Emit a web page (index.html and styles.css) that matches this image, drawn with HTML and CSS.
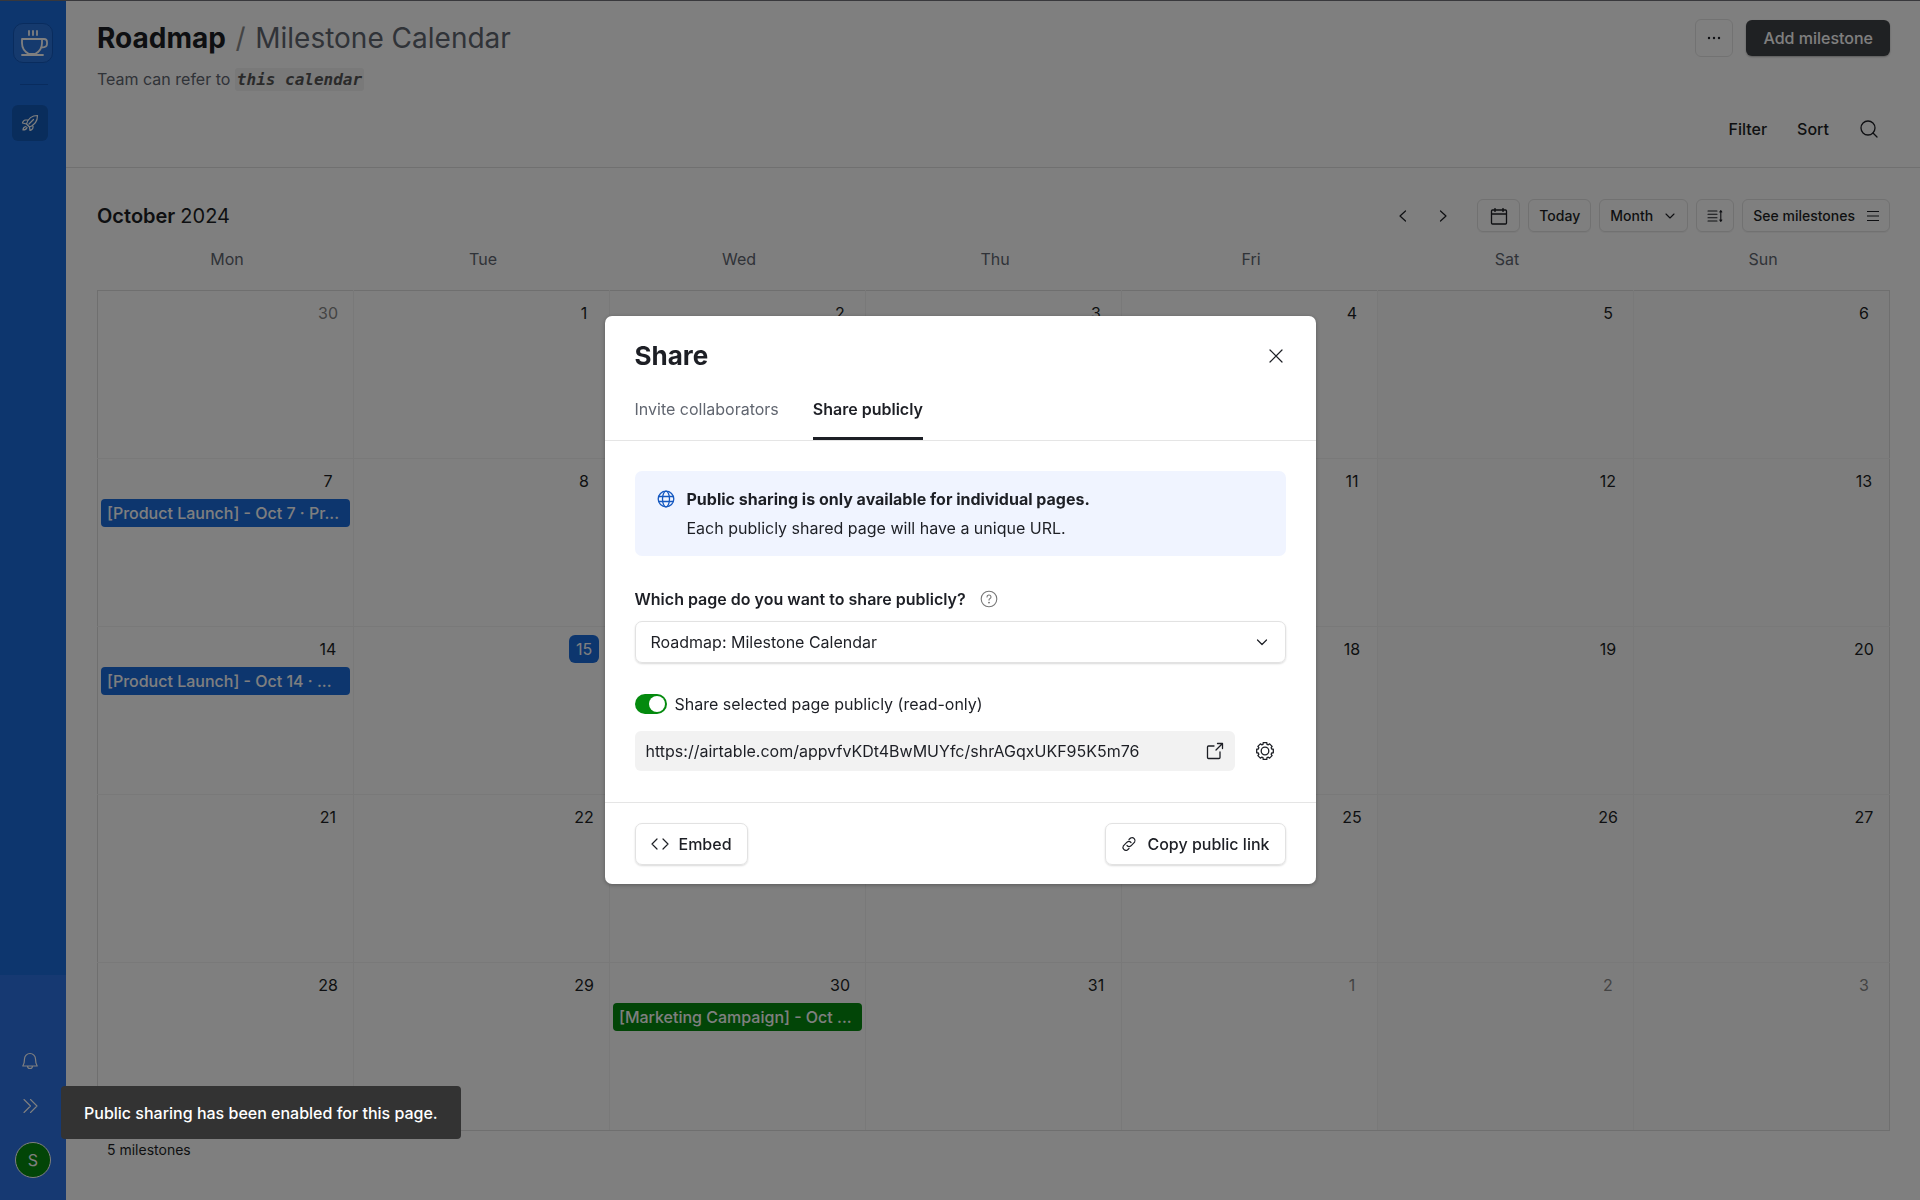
FILE: index.html
```
<!DOCTYPE html>
<html lang="en">
<head>
    <meta charset="UTF-8">
    <meta name="viewport" content="width=device-width, initial-scale=1.0">
    <title>Roadmap - Milestone Calendar</title>
    <link rel="stylesheet" href="styles.css">
</head>
<body>
    <div class="app">
        <nav class="sidebar">
            <a class="logo" href="#" aria-label="Home">
                <svg width="30" height="30" viewBox="0 0 30 30" fill="none" stroke="currentColor" stroke-width="1.800" stroke-linecap="round" stroke-linejoin="round">
                    <path d="M11 3v4M15 3v4M19 3v4M4 11h20v4c0 5-3 9-7 11h-6c-4-2-7-6-7-11zM24 11h2c2 0 3 1 3 3v2c0 2-2 3.500-5.500 3.500M4 27h21"/>
                </svg>
            </a>
            <span class="divider"></span>
            <a class="nav-item" href="#" aria-label="Roadmap">
                <svg width="18" height="18" viewBox="0 0 18 18" fill="none" stroke="currentColor" stroke-width="1.200" stroke-linecap="round" stroke-linejoin="round">
                    <path d="M5.500 10C7 5 10.500 1.500 16.500 1.500c0 5.500-3 9.500-8 11.500zM7.500 6H4.500C3 6 1.500 8 1.500 9l4 1M12 10.500v3c0 1.500-2 3-3 3l-.5-3.500M12.500 5.500L8 10M5 12.500c-2 .3-3 1.500-3 3.500 2 0 3.500-.8 4-2.500"/>
                </svg>
            </a>
            <div class="sidebar-bottom">
                <button class="side-btn" aria-label="Notifications">
                    <svg width="18" height="18" viewBox="0 0 18 18" fill="none" stroke="currentColor" stroke-width="1.200" stroke-linecap="round" stroke-linejoin="round">
                        <path d="M1.800 14C3 12 3.500 10 3.500 7a5.500 5.500 0 0 1 11 0c0 3 .5 5 1.700 7zM6.500 14a2.500 2.500 0 0 0 5 0"/>
                    </svg>
                </button>
                <button class="side-btn" aria-label="Expand sidebar">
                    <svg width="18" height="18" viewBox="0 0 18 18" fill="none" stroke="currentColor" stroke-width="1.100" stroke-linecap="round" stroke-linejoin="round">
                        <path d="M3 2.500L9.500 9 3 15.500M9.500 2.500L16 9l-6.500 6.500"/>
                    </svg>
                </button>
                <button class="avatar">S</button>
            </div>
        </nav>

        <div class="content">
            <header class="page-header">
                <div class="title-row">
                    <h1>Roadmap <span class="slash">/</span> <span class="page-name">Milestone Calendar</span></h1>
                    <button class="more-btn" aria-label="More options">
                        <svg width="14" height="4" viewBox="0 0 14 4" fill="currentColor">
                            <circle cx="2" cy="2" r="1.200"/><circle cx="7" cy="2" r="1.200"/><circle cx="12" cy="2" r="1.200"/>
                        </svg>
                    </button>
                    <button class="add-btn">Add milestone</button>
                </div>
                <p class="subtitle">Team can refer to <code>this calendar</code></p>
                <div class="filter-row">
                    <button>Filter</button>
                    <button>Sort</button>
                    <button aria-label="Search">
                        <svg width="20" height="20" viewBox="0 0 20 20" fill="none" stroke="currentColor" stroke-width="1.300" stroke-linecap="round">
                            <circle cx="9" cy="9" r="7"/><path d="M14 14L18 18"/>
                        </svg>
                    </button>
                </div>
            </header>

            <main class="calendar">
                <div class="calendar-bar">
                    <h2>October <span>2024</span></h2>
                    <div class="arrows">
                        <button aria-label="Previous month">
                            <svg width="16" height="16" viewBox="0 0 16 16" fill="none" stroke="currentColor" stroke-width="1.200" stroke-linecap="round" stroke-linejoin="round"><path d="M10.500 3L5 8l5.500 5"/></svg>
                        </button>
                        <button aria-label="Next month">
                            <svg width="16" height="16" viewBox="0 0 16 16" fill="none" stroke="currentColor" stroke-width="1.200" stroke-linecap="round" stroke-linejoin="round"><path d="M5.500 3L11 8l-5.500 5"/></svg>
                        </button>
                    </div>
                    <button class="tool-btn date-btn" aria-label="Pick a date">
                        <svg width="18" height="18" viewBox="0 0 18 18" fill="none" stroke="currentColor" stroke-width="1.300" stroke-linejoin="round"><rect x="1.500" y="3" width="15" height="14" rx="1"/><path d="M1.500 7h15M5 1v4M13 1v4"/></svg>
                    </button>
                    <button class="tool-btn">Today</button>
                    <div class="tool-select">
                        <select aria-label="Calendar range">
                            <option>Month</option>
                        </select>
                        <svg width="10" height="10" viewBox="0 0 10 10" fill="none" stroke="currentColor" stroke-width="1.100" stroke-linecap="round" stroke-linejoin="round"><path d="M1 3l4 4 4-4"/></svg>
                    </div>
                    <button class="tool-btn height-btn" aria-label="Row height">
                        <svg width="16" height="14" viewBox="0 0 16 14" fill="none" stroke="currentColor" stroke-width="1.100" stroke-linecap="round" stroke-linejoin="round"><path d="M1 2h9M1 5.300h9M1 8.700h9M1 12h9M13.800 2v10M12.800 3l1-1.300 1 1.300M12.800 11l1 1.300 1-1.300"/></svg>
                    </button>
                    <button class="tool-btn see-btn">See milestones
                        <svg width="12" height="12" viewBox="0 0 12 12" stroke="currentColor" stroke-width="1.100"><path d="M0 1.500h12M0 6h12M0 10.500h12"/></svg>
                    </button>
                </div>

                <table class="month">
                    <thead>
                        <tr><th>Mon</th><th>Tue</th><th>Wed</th><th>Thu</th><th>Fri</th><th>Sat</th><th>Sun</th></tr>
                    </thead>
                    <tbody>
                        <tr>
                            <td class="other"><span class="day">30</span></td>
                            <td><span class="day">1</span></td>
                            <td><span class="day">2</span></td>
                            <td><span class="day">3</span></td>
                            <td><span class="day">4</span></td>
                            <td><span class="day">5</span></td>
                            <td><span class="day">6</span></td>
                        </tr>
                        <tr>
                            <td><span class="day">7</span><a class="event" href="#">[Product Launch] - Oct 7 · Pr...</a></td>
                            <td><span class="day">8</span></td>
                            <td><span class="day">9</span></td>
                            <td><span class="day">10</span></td>
                            <td><span class="day">11</span></td>
                            <td><span class="day">12</span></td>
                            <td><span class="day">13</span></td>
                        </tr>
                        <tr>
                            <td><span class="day">14</span><a class="event" href="#">[Product Launch] - Oct 14 · ...</a></td>
                            <td><span class="day today">15</span></td>
                            <td><span class="day">16</span></td>
                            <td><span class="day">17</span></td>
                            <td><span class="day">18</span></td>
                            <td><span class="day">19</span></td>
                            <td><span class="day">20</span></td>
                        </tr>
                        <tr>
                            <td><span class="day">21</span></td>
                            <td><span class="day">22</span></td>
                            <td><span class="day">23</span></td>
                            <td><span class="day">24</span></td>
                            <td><span class="day">25</span></td>
                            <td><span class="day">26</span></td>
                            <td><span class="day">27</span></td>
                        </tr>
                        <tr>
                            <td><span class="day">28</span></td>
                            <td><span class="day">29</span></td>
                            <td><span class="day">30</span><a class="event green" href="#">[Marketing Campaign] - Oct ...</a></td>
                            <td><span class="day">31</span></td>
                            <td class="other"><span class="day">1</span></td>
                            <td class="other"><span class="day">2</span></td>
                            <td class="other"><span class="day">3</span></td>
                        </tr>
                    </tbody>
                </table>
                <p class="count">5 milestones</p>
            </main>
        </div>
    </div>

    <div class="overlay">
        <div class="modal" role="dialog" aria-labelledby="share-title">
            <div class="modal-head">
                <h2 id="share-title">Share</h2>
                <button class="icon-btn" aria-label="Close">
                    <svg width="16" height="16" viewBox="0 0 16 16" stroke="currentColor" stroke-width="1.200" stroke-linecap="round"><path d="M2 2l12 12M14 2L2 14"/></svg>
                </button>
            </div>
            <div class="tabs">
                <button class="tab">Invite collaborators</button>
                <button class="tab active">Share publicly</button>
            </div>

            <div class="modal-body">
                <div class="notice">
                    <svg width="18" height="18" viewBox="0 0 18 18" fill="none" stroke="currentColor" stroke-width="1.300"><circle cx="9" cy="9" r="7.800"/><ellipse cx="9" cy="9" rx="3.500" ry="7.800"/><path d="M1.800 6.500h14.400M1.800 11.500h14.400"/></svg>
                    <div>
                        <strong>Public sharing is only available for individual pages.</strong>
                        <p>Each publicly shared page will have a unique URL.</p>
                    </div>
                </div>

                <div class="field-label">
                    <label for="page">Which page do you want to share publicly?</label>
                    <svg width="18" height="18" viewBox="0 0 18 18" fill="none" stroke="currentColor" stroke-width="1.100" stroke-linecap="round"><circle cx="9" cy="9" r="7.800"/><path d="M7 7a2 2 0 1 1 2.800 1.800c-.6.300-.8.600-.8 1.300"/><circle cx="9" cy="12.600" r=".4" fill="currentColor"/></svg>
                </div>
                <div class="page-select">
                    <select id="page">
                        <option>Roadmap: Milestone Calendar</option>
                    </select>
                    <svg width="12" height="12" viewBox="0 0 12 12" fill="none" stroke="currentColor" stroke-width="1.200" stroke-linecap="round" stroke-linejoin="round"><path d="M1.500 4L6 8.500 10.500 4"/></svg>
                </div>

                <div class="toggle-row">
                    <input type="checkbox" id="public" class="toggle" checked>
                    <label for="public">Share selected page publicly (read-only)</label>
                </div>

                <div class="link-row">
                    <div class="link-box">
                        <input type="text" aria-label="Public link" value="https://airtable.com/appvfvKDt4BwMUYfc/shrAGqxUKF95K5m76" readonly>
                        <a href="#" aria-label="Open link">
                            <svg width="18" height="18" viewBox="0 0 18 18" fill="none" stroke="currentColor" stroke-width="1.300" stroke-linecap="round" stroke-linejoin="round"><path d="M11.500 1.500h5v5M16.500 1.500L10 8M8 4H2.500a1 1 0 0 0-1 1v10.500a1 1 0 0 0 1 1H13a1 1 0 0 0 1-1V10"/></svg>
                        </a>
                    </div>
                    <button class="icon-btn" aria-label="Link settings">
                        <svg width="20" height="20" viewBox="0 0 20 20" fill="none" stroke="currentColor" stroke-width="1.300" stroke-linejoin="round"><circle cx="10" cy="10" r="3.800"/><path d="M11.800 1.700L12 3.300l1.300.5 1.300-.9 2.500 2.500-.9 1.300.5 1.300 1.600.2v3.600l-1.600.2-.5 1.300.9 1.300-2.500 2.500-1.300-.9-1.300.5-.2 1.600H8.200L8 16.700l-1.300-.5-1.300.9-2.500-2.500.9-1.300-.5-1.300-1.600-.2V8.200L3.300 8l.5-1.300-.9-1.300 2.500-2.500 1.300.9L8 3.300l.2-1.600z"/></svg>
                    </button>
                </div>
            </div>

            <div class="modal-foot">
                <button class="foot-btn">
                    <svg width="18" height="14" viewBox="0 0 18 14" fill="none" stroke="currentColor" stroke-width="1.200" stroke-linecap="round" stroke-linejoin="round"><path d="M6 2L1 7l5 5M12 2l5 5-5 5"/></svg>
                    Embed
                </button>
                <button class="foot-btn">
                    <svg width="16" height="16" viewBox="0 0 16 16" fill="none" stroke="currentColor" stroke-width="1.200" stroke-linecap="round" stroke-linejoin="round"><path d="M6 9.500A3 3 0 0 0 10 9.800L13.600 6.200A3 3 0 0 0 9.600 2L8 3.500M10 6.500A3 3 0 0 0 6 6.200L2.400 9.800A3 3 0 0 0 6.400 14L8 12.500"/></svg>
                    Copy public link
                </button>
            </div>
        </div>
    </div>

    <div class="toast" role="status">Public sharing has been enabled for this page.</div>
</body>
</html>
```
FILE: styles.css
```
* {
    box-sizing: border-box;
}
body {
    margin: 0;
    font-family: Inter, "Liberation Sans", sans-serif;
    font-size: 16px;
    line-height: 20px;
    color: #1d1f25;
    background: #fff;
}
h1, h2, p {
    margin: 0;
}
button, input, select {
    font: inherit;
    color: inherit;
}
button {
    display: flex;
    align-items: center;
    justify-content: center;
    padding: 0;
    border: none;
    background: none;
    cursor: pointer;
}
a {
    color: inherit;
    text-decoration: none;
}
svg {
    display: block;
    flex: none;
}
select {
    appearance: none;
    background: none;
    border: none;
    outline: none;
}

/* page shell */
.app {
    display: flex;
    min-height: 100vh;
    border-top: 1px solid #707078;
}
.sidebar {
    display: flex;
    flex-direction: column;
    width: 66px;
    padding-top: 22px;
    background: #1b6cdc;
    color: #fff;
}
.logo {
    display: flex;
    align-items: center;
    justify-content: center;
    width: 40px;
    height: 40px;
    margin-left: 13px;
    border: 1px solid #1359bc;
    border-radius: 10px;
    background: #2b74dc;
}
.divider {
    width: 28px;
    height: 1px;
    margin: 21px 0 20px 20px;
    background: #1359bc;
}
.nav-item {
    display: flex;
    align-items: center;
    justify-content: center;
    width: 36px;
    height: 36px;
    margin-left: 12px;
    border-radius: 6px;
    background: #125ab8;
}
.sidebar-bottom {
    display: flex;
    flex-direction: column;
    gap: 20px;
    height: 225px;
    margin-top: auto;
    padding: 73px 0 0 12px;
    background: #2c72e4;
}
.side-btn {
    width: 36px;
    height: 25px;
}
.avatar {
    width: 36px;
    height: 36px;
    margin-top: 4px;
    margin-left: 3px;
    border: 1px solid #fff;
    border-radius: 50%;
    background: #048a0e;
}
.content {
    flex: 1;
    min-width: 0;
}

/* header */
.page-header {
    padding: 18px 30px 28px 31px;
    border-bottom: 1px solid #e0e0e0;
}
.title-row {
    display: flex;
    align-items: center;
    height: 38px;
}
h1 {
    flex: 1;
    font-size: 28px;
    font-weight: 700;
    line-height: 38px;
}
.slash {
    margin: 0 3px;
    font-weight: 400;
    color: #888;
}
.page-name {
    font-weight: 400;
    color: #616670;
}
.more-btn {
    width: 38px;
    height: 38px;
    margin-right: 13px;
    border: 1px solid #e5e5e5;
    border-radius: 6px;
}
.add-btn {
    height: 36px;
    padding: 0 17px;
    border-radius: 6px;
    background: #3f4246;
    color: #fff;
    font-weight: 500;
    box-shadow: 0 1px 2px rgba(0,0,0,0.3);
}
.subtitle {
    margin-top: 10px;
    line-height: 24px;
    color: #616670;
}
.subtitle code {
    padding: 2px;
    border-radius: 3px;
    background: #f2f2f2;
    font-family: "DejaVu Sans Mono", monospace;
    font-size: 16px;
    font-weight: 700;
    font-style: italic;
    color: #555;
}
.filter-row {
    display: flex;
    justify-content: flex-end;
    gap: 30px;
    margin-top: 27px;
    padding-right: 11px;
    height: 20px;
    font-weight: 500;
}

/* calendar */
.calendar {
    padding: 31px 30px 20px 31px;
}
.calendar-bar {
    display: flex;
    align-items: center;
    gap: 8px;
    font-size: 14px;
}
.calendar-bar h2 {
    flex: 1;
    font-size: 20px;
    font-weight: 600;
    line-height: 24px;
}
.calendar-bar h2 span {
    font-weight: 400;
}
.arrows {
    display: flex;
    gap: 24px;
    margin-right: 18px;
}
.tool-btn, .tool-select {
    height: 33px;
    padding: 0 10px;
    border: 1px solid #e2e2e2;
    border-radius: 6px;
    font-weight: 500;
    box-shadow: 0 1px 1px rgba(0,0,0,0.05);
}
.date-btn {
    width: 43px;
}
.height-btn {
    width: 38px;
    padding: 0;
}
.tool-select {
    display: flex;
    align-items: center;
    gap: 12px;
    padding-right: 12px;
}
.tool-select select {
    padding: 0;
}
.see-btn {
    gap: 12px;
}
.month {
    width: 100%;
    table-layout: fixed;
    border-collapse: collapse;
}
.month th {
    height: 58px;
    padding: 0 0 4px 3px;
    font-weight: 400;
    color: #616670;
}
.month td {
    height: 168px;
    padding: 8px 3px 0;
    border: 1px solid #f2f2f2;
    vertical-align: top;
}
.month tbody tr:first-child td {
    border-top-color: #dedede;
}
.month tbody tr:last-child td {
    border-bottom-color: #dedede;
}
.month td:first-child {
    border-left-color: #dedede;
}
.month td:last-child {
    border-right-color: #dedede;
}
.month td:nth-child(n+6) {
    background: #fbfbfb;
}
.month td.other {
    color: #888;
}
.day {
    display: block;
    width: 30px;
    height: 28px;
    margin: 0 7px 4px auto;
    border-radius: 6px;
    line-height: 28px;
    text-align: center;
}
.day.today {
    background: #1b6cdc;
    color: #fff;
}
.event {
    display: block;
    height: 28px;
    padding: 0 6px;
    border-radius: 4px;
    background: #1b6cdc;
    color: #fff;
    font-weight: 500;
    line-height: 28px;
    white-space: nowrap;
    overflow: hidden;
    text-overflow: ellipsis;
}
.event.green {
    background: #048a0e;
}
.count {
    padding: 9px 10px 0;
    font-size: 14px;
}

/* share dialog */
.overlay {
    position: fixed;
    inset: 0;
    display: flex;
    align-items: center;
    justify-content: center;
    background: rgba(0,0,0,0.5);
}
.modal {
    width: 711px;
    max-width: 100%;
    border-radius: 7px;
    background: #fff;
    box-shadow: 0 1px 4px rgba(0,0,0,0.3);
}
.modal-head {
    display: flex;
    align-items: center;
    justify-content: space-between;
    padding: 22px 30px 0;
}
.modal-head h2 {
    font-size: 26px;
    font-weight: 700;
    line-height: 36px;
}
.icon-btn {
    width: 20px;
    height: 20px;
}
.tabs {
    display: flex;
    gap: 34px;
    padding: 17px 30px 0;
    border-bottom: 1px solid #e5e5e5;
}
.tab {
    padding: 8px 0 18px;
    border-bottom: 3px solid transparent;
    color: #616670;
}
.tab.active {
    border-color: #1d1f25;
    color: #1d1f25;
    font-weight: 600;
}
.modal-body {
    padding: 30px 30px 31px;
}
.notice {
    display: flex;
    gap: 12px;
    padding: 14px 22px 13px;
    border-radius: 7px;
    background: #f0f4ff;
    line-height: 29px;
}
.notice svg {
    margin-top: 5px;
    color: #1558c0;
}
.notice strong {
    font-weight: 700;
}
.field-label {
    display: flex;
    align-items: center;
    gap: 14px;
    margin: 33px 0 12px;
    font-weight: 600;
}
.field-label svg {
    color: #777;
}
.page-select {
    display: grid;
    align-items: center;
}
.page-select select, .page-select svg {
    grid-area: 1 / 1;
}
.page-select select {
    width: 100%;
    height: 42px;
    padding: 0 15px;
    border: 1px solid #e2e2e2;
    border-radius: 7px;
    box-shadow: 0 1px 2px rgba(0,0,0,0.15);
}
.page-select svg {
    justify-self: end;
    margin-right: 18px;
    pointer-events: none;
}
.toggle-row {
    display: flex;
    align-items: center;
    gap: 8px;
    margin: 31px 0 17px;
}
.toggle {
    appearance: none;
    display: flex;
    justify-content: flex-end;
    width: 32px;
    height: 20px;
    margin: 0;
    padding: 2px;
    border-radius: 10px;
    background: #048a0e;
}
.toggle::before {
    content: "";
    width: 16px;
    height: 16px;
    border-radius: 50%;
    background: #fff;
}
.toggle:not(:checked) {
    justify-content: flex-start;
    background: #ccc;
}
.link-row {
    display: flex;
    align-items: center;
    gap: 20px;
    padding-right: 11px;
}
.link-box {
    display: flex;
    flex: 1;
    align-items: center;
    height: 40px;
    padding: 0 11px;
    border-radius: 6px;
    background: #f2f2f2;
}
.link-box input {
    flex: 1;
    padding: 0;
    border: none;
    outline: none;
    background: none;
}
.modal-foot {
    display: flex;
    justify-content: space-between;
    padding: 20px 30px 19px;
    border-top: 1px solid #e5e5e5;
}
.foot-btn {
    gap: 10px;
    height: 42px;
    padding: 0 15px;
    border: 1px solid #e2e2e2;
    border-radius: 7px;
    font-weight: 500;
    box-shadow: 0 1px 2px rgba(0,0,0,0.15);
}

.toast {
    position: fixed;
    left: 61px;
    bottom: 61px;
    padding: 17px 23px 16px;
    border-radius: 4px;
    background: #333;
    color: #fff;
    font-weight: 500;
}
```
